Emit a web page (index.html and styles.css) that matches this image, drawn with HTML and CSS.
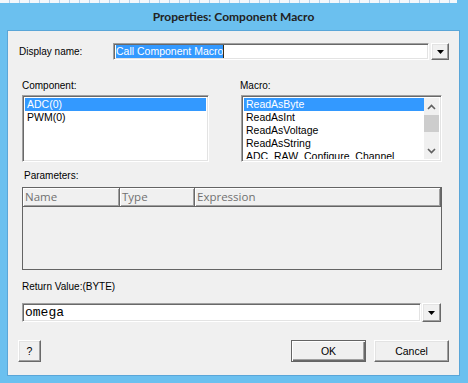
FILE: index.html
```html
<!DOCTYPE html>
<html lang="en">
<head>
    <meta charset="UTF-8">
    <meta name="viewport" content="width=device-width, initial-scale=1.0">
    <title>Properties: Component Macro</title>
    <link rel="stylesheet" href="styles.css">
</head>
<body>
    <div class="desk-strip"></div>
    <div class="window">
        <div class="titlebar">Properties: Component Macro</div>
        <div class="client">
            <div class="name-row">
                <label class="lbl name-lbl">Display name:</label>
                <div class="field sunken name-field"><span class="sel">Call Component Macro</span><span class="caret"></span></div>
                <div class="drop-btn raised">
                    <svg width="7" height="4" viewBox="0 0 7 4"><polygon points="0,0 7,0 3.5,4" fill="#000"/></svg>
                </div>
            </div>

            <div class="lists">
                <div class="comp-col">
                    <div class="lbl">Component:</div>
                    <div class="listbox sunken">
                        <div class="items">
                            <div class="item selected">ADC(0)</div>
                            <div class="item">PWM(0)</div>
                        </div>
                    </div>
                </div>
                <div class="macro-col">
                    <div class="lbl">Macro:</div>
                    <div class="listbox sunken">
                        <div class="items">
                            <div class="item selected">ReadAsByte</div>
                            <div class="item">ReadAsInt</div>
                            <div class="item">ReadAsVoltage</div>
                            <div class="item">ReadAsString</div>
                            <div class="item">ADC_RAW_Configure_Channel</div>
                        </div>
                        <div class="scrollbar">
                            <div class="sb-arrow">
                                <svg width="9" height="6" viewBox="0 0 9 6"><polyline points="1,5 4.5,1.5 8,5" fill="none" stroke="#606060" stroke-width="1.6"/></svg>
                            </div>
                            <div class="sb-thumb"></div>
                            <div class="sb-track"></div>
                            <div class="sb-arrow">
                                <svg width="9" height="6" viewBox="0 0 9 6"><polyline points="1,1 4.5,4.5 8,1" fill="none" stroke="#606060" stroke-width="1.6"/></svg>
                            </div>
                        </div>
                    </div>
                </div>
            </div>

            <div class="lbl params-lbl">Parameters:</div>
            <div class="grid">
                <div class="grid-head">
                    <div class="hcell col-name">Name</div>
                    <div class="hcell col-type">Type</div>
                    <div class="hcell col-expr">Expression</div>
                </div>
            </div>

            <div class="lbl return-lbl">Return Value:(BYTE)</div>
            <div class="return-row">
                <div class="field sunken return-field">omega</div>
                <div class="drop-btn raised return-btn">
                    <svg width="7" height="4" viewBox="0 0 7 4"><polygon points="0,0 7,0 3.5,4" fill="#000"/></svg>
                </div>
            </div>

            <div class="button-row">
                <button class="btn raised help-btn">?</button>
                <div class="main-buttons">
                    <button class="btn default-btn">OK</button>
                    <button class="btn raised">Cancel</button>
                </div>
            </div>
        </div>
    </div>
</body>
</html>
```

FILE: styles.css
```css
body {
    margin: 0;
    width: 468px;
    height: 383px;
    overflow: hidden;
    font-family: "Liberation Sans", Arial, sans-serif;
    font-size: 10px;
    color: #000;
    background: #6bc0ef;
}
.desk-strip {
    height: 3px;
    width: 457px;
    background: repeating-linear-gradient(90deg, #f4f8fc 0, #f4f8fc 9px, #b9d3ee 9px, #b9d3ee 10px);
}
.window {
    height: 380px;
    padding: 0 8px 7px 7px;
    box-sizing: border-box;
    background: #6bc0ef;
}
.titlebar {
    height: 27px;
    line-height: 27px;
    text-align: center;
    font-family: Lato, "Liberation Sans", sans-serif;
    font-weight: 700;
    font-size: 12px;
    color: #222;
}
.client {
    height: 346px;
    box-sizing: border-box;
    border: 1px solid #5aa6d8;
    background: #f0f0f0;
}
.lbl {
    height: 13px;
    line-height: 13px;
    white-space: nowrap;
}

/* sunken / raised 3d borders */
.sunken {
    box-sizing: border-box;
    border: 1px solid;
    border-color: #a0a0a0 #fff #fff #a0a0a0;
    box-shadow: inset 1px 1px #696969, inset -1px -1px #e3e3e3;
    background: #fff;
}
.raised {
    box-sizing: border-box;
    border: 1px solid;
    border-color: #fff #696969 #696969 #fff;
    box-shadow: inset -1px -1px #a0a0a0, inset 1px 1px #e3e3e3;
    background: #f0f0f0;
}

/* display name */
.name-row {
    display: flex;
    align-items: center;
    margin-top: 12px;
    padding-left: 11px;
}
.name-lbl {
    width: 94px;
}
.field {
    display: flex;
    align-items: center;
    padding-left: 2px;
    overflow: hidden;
    white-space: nowrap;
}
.name-field {
    width: 316px;
    height: 17px;
    font-size: 10.5px;
}
.sel {
    background: #3399ff;
    color: #fff;
    line-height: 13px;
}
.caret {
    width: 1px;
    height: 13px;
    background: #3a2a10;
}
.drop-btn {
    display: flex;
    align-items: center;
    justify-content: center;
    width: 18px;
    height: 17px;
    margin-left: 2px;
}

/* component + macro lists */
.lists {
    display: flex;
    margin-top: 19px;
    padding-left: 14px;
}
.comp-col {
    width: 187px;
}
.macro-col {
    width: 201px;
    margin-left: 32px;
}
.macro-col .lbl {
    margin-left: -1px;
}
.listbox {
    display: flex;
    height: 67px;
    margin-top: 3px;
    padding: 2px;
    overflow: hidden;
}
.items {
    flex: 1;
    overflow: hidden;
}
.item {
    height: 13px;
    line-height: 13px;
    padding-left: 2px;
    font-size: 10.5px;
    white-space: nowrap;
}
.item.selected {
    background: #3399ff;
    color: #fff;
}
.scrollbar {
    display: flex;
    flex-direction: column;
    width: 15px;
    background: #f0f0f0;
}
.sb-arrow {
    display: flex;
    align-items: center;
    justify-content: center;
    height: 17px;
}
.sb-thumb {
    height: 17px;
    background: #cdcdcd;
}
.sb-track {
    flex: 1;
}

/* parameters grid */
.params-lbl {
    margin-top: 7px;
    padding-left: 16px;
}
.grid {
    width: 420px;
    height: 83px;
    margin: 5px 0 0 14px;
    box-sizing: border-box;
    border: 1px solid #646464;
    background: #f0f0f0;
}
.grid-head {
    display: flex;
    height: 18px;
    border-bottom: 1px solid #646464;
}
.hcell {
    box-sizing: border-box;
    height: 18px;
    line-height: 18px;
    padding-left: 2px;
    font-family: "Open Sans", "Liberation Sans", sans-serif;
    font-size: 11.5px;
    color: #707070;
    background: #f0f0f0;
    border-right: 1px solid #696969;
    box-shadow: inset 1px 1px #fff, inset -1px -1px #a0a0a0;
}
.col-name {
    width: 97px;
}
.col-type {
    width: 75px;
}
.col-expr {
    width: 246px;
}

/* return value */
.return-lbl {
    margin-top: 10px;
    padding-left: 14px;
}
.return-row {
    display: flex;
    margin: 10px 0 0 14px;
}
.return-field {
    width: 399px;
    height: 19px;
    font-family: "Liberation Mono", "Courier New", monospace;
    font-size: 13px;
}
.return-btn {
    width: 19px;
    height: 19px;
    margin-left: 1px;
}

/* bottom buttons */
.button-row {
    display: flex;
    justify-content: space-between;
    margin-top: 18px;
    padding: 0 10px;
}
.main-buttons {
    display: flex;
    gap: 8px;
}
.btn {
    height: 22px;
    width: 75px;
    padding: 0;
    font-family: "Liberation Sans", Arial, sans-serif;
    font-size: 10.5px;
    color: #000;
}
.help-btn {
    width: 23px;
}
.default-btn {
    box-sizing: border-box;
    border: 1px solid #646464;
    background: #f0f0f0;
    box-shadow: inset 1px 1px #fff, inset -1px -1px #696969, inset -2px -2px #a0a0a0;
}
```
